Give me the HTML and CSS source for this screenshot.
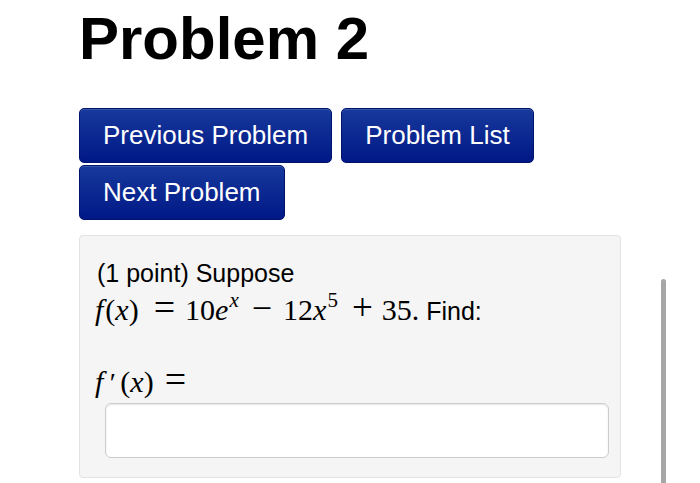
FILE: index.html
```html
<!DOCTYPE html>
<html lang="en">
<head>
    <meta charset="UTF-8">
    <meta name="viewport" content="width=device-width, initial-scale=1.0">
    <title>Problem 2</title>
    <link rel="stylesheet" href="styles.css">
</head>
<body>
    <div class="page">
        <h1 class="problem-title">Problem 2</h1>

        <div class="problem-nav">
            <button class="nav-button">Previous Problem</button>
            <button class="nav-button">Problem List</button>
            <button class="nav-button">Next Problem</button>
        </div>

        <div class="problem-box">
            <div class="problem-line">(1 point) Suppose</div>
            <div class="math-line">
                <span class="mi f">f</span><span class="mo">(</span><span class="mi">x</span><span class="mo">)</span><span class="rel">=</span><span class="mn">10</span><span class="mi">e</span><sup class="sup mi">x</sup><span class="bin minus">−</span><span class="mn">12</span><span class="mi">x</span><sup class="sup">5</sup><span class="bin plus">+</span><span class="mn">35</span>.<span class="text"> Find:</span>
            </div>
            <div class="math-line answer-label">
                <span class="mi f">f</span><span class="prime">′</span><span class="mo">(</span><span class="mi">x</span><span class="mo">)</span><span class="rel rel-short">=</span>
            </div>
            <input class="answer-input" type="text">
        </div>
    </div>

    <div class="scroll-thumb"></div>
</body>
</html>
```

FILE: styles.css
```css
body {
    margin: 0;
    padding: 0;
    background: #ffffff;
    font-family: "Liberation Sans", Arial, sans-serif;
    color: #000000;
    overflow: hidden;
}

.page {
    padding: 0 0 0 79px;
}

.problem-title {
    margin: 0 0 34px 0;
    padding-top: 4px;
    font-size: 60px;
    line-height: 70px;
    font-weight: bold;
}

.problem-nav {
    display: flex;
    flex-wrap: wrap;
    gap: 2px 9px;
    width: 560px;
}

.nav-button {
    font-family: "Liberation Sans", Arial, sans-serif;
    font-size: 26px;
    line-height: 31px;
    padding: 11px 23px;
    color: #ffffff;
    background: linear-gradient(to bottom, #17399c, #001886);
    border: 1px solid #00146a;
    border-radius: 5px;
    box-shadow: inset 0 1px 0 rgba(255, 255, 255, 0.15);
    cursor: pointer;
}

.problem-box {
    margin-top: 15px;
    width: 512px;
    padding: 22px 11px 19px 17px;
    background: #f5f5f5;
    border: 1px solid #e3e3e3;
    border-radius: 4px;
}

.problem-line {
    font-size: 25px;
    line-height: 30px;
}

.math-line {
    font-family: "Liberation Serif", "Times New Roman", serif;
    font-size: 30px;
    line-height: 34px;
    margin-top: 5px;
    margin-left: -2px;
}

.math-line .text {
    font-family: "Liberation Sans", Arial, sans-serif;
    font-size: 25px;
}

.mi {
    font-style: italic;
}

.f {
    padding-right: 2px;
}

.rel {
    font-size: 38px;
    line-height: 0;
    margin: 0 10px 0 15px;
}

.rel-short {
    margin-left: 11px;
}

.bin {
    font-size: 36px;
    line-height: 0;
}

.minus {
    margin: 0 11px;
}

.plus {
    font-size: 37px;
    margin: 0 9px 0 12px;
}

.sup {
    font-size: 21px;
    line-height: 0;
    vertical-align: 13px;
    padding: 0 2px 0 1px;
}

.prime {
    display: inline-block;
    width: 15px;
    text-align: center;
    font-size: 28px;
}

.answer-label {
    margin-top: 37px;
}

.answer-input {
    display: block;
    box-sizing: border-box;
    width: 504px;
    height: 55px;
    margin: 3px 0 0 8px;
    background: #ffffff;
    border: 1px solid #cccccc;
    border-radius: 6px;
    box-shadow: inset 0 1px 2px rgba(0, 0, 0, 0.1);
}

.scroll-thumb {
    position: fixed;
    left: 661px;
    top: 279px;
    width: 5px;
    height: 210px;
    background: #a6a6a6;
    border-radius: 3px;
}
```
